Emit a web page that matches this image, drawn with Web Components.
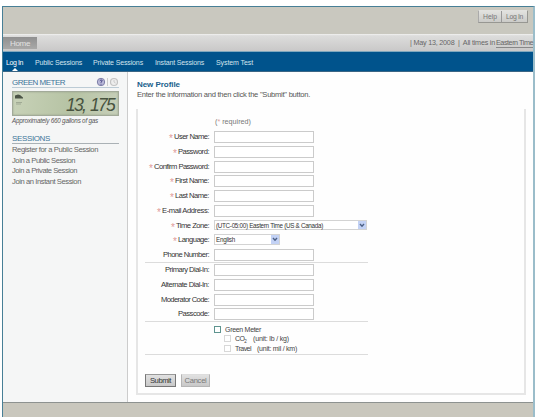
<!DOCTYPE html>
<html lang="en">
<head>
<meta charset="utf-8">
<title>New Profile</title>
<style>
  html, body { margin: 0; height: 417px; overflow: hidden; background: #fff; }
  body { font-family: "Liberation Sans", Arial, sans-serif; font-size: 7.6px; line-height: 10px; color: #444; }
</style>
</head>
<body>
<app-frame>
  <top-bar slot="header"></top-bar>
  <nav-bar slot="header"></nav-bar>
  <side-bar slot="side"></side-bar>
  <profile-page></profile-page>
</app-frame>

<script>
class BaseElement extends HTMLElement {
    constructor() {
        super()
        this.attachShadow({ mode: 'open' })
        this.shadowRoot.innerHTML = `<style>* { box-sizing: border-box; }</style>` + this.template()
    }
}

class AppFrame extends BaseElement {
    template() {
        return `
        <style>
            :host { display: flex; flex-direction: column; box-sizing: border-box; height: 411px; width: 533px;
                margin: 6px 0 0 2px; border: 1px solid #477f96; border-right: 2px solid #9bbdca; border-bottom: 0; }
            .body { display: flex; height: 330px; }
            main { flex: 1; min-width: 0; background: #fefefe; }
            footer { flex: 1; background: #c9c7bd; border-top: 1px solid #8d9290; }
        </style>
        <slot name="header"></slot>
        <div class="body"><slot name="side"></slot><main><slot></slot></main></div>
        <footer></footer>`
    }
}

class TopBar extends BaseElement {
    template() {
        return `
        <style>
            :host { display: flex; justify-content: flex-end; box-sizing: border-box; height: 27px; padding: 3px 5px 0 0; background: #c9c8bf; }
            .btns { display: flex; height: 13px; border: 1px solid #979792; border-top-color: #e2e2df; border-left-color: #aaa;
                background: linear-gradient(#e2e2df, #cbcbc8); color: #777; }
            .btns div { display: flex; align-items: center; padding: 1px 4px 0; font-size: 6.8px; }
            .btns div + div { border-left: 1px solid #999; }
        </style>
        <div class="btns"><div><fit-text w="14">Help</fit-text></div><div><fit-text w="17">Log In</fit-text></div></div>`
    }
}

class NavBar extends BaseElement {
    template() {
        return `
        <style>
            :host { display: block; }
            .tabs { display: flex; justify-content: space-between; height: 18px; background: linear-gradient(#f3f3f2 0, #dddddc 10%, #c9c8c8); border-bottom: 1px solid #80a8be; }
            .home { margin-top: 3px; width: 34px; height: 12px; padding-left: 7px; background: linear-gradient(#909090, #a9a9a8); color: #e2e2e2; font-size: 8px; line-height: 14px; }
            .date { display: flex; gap: 1px; padding-top: 4px; color: #666; font-size: 7.2px; }
            .date u { text-decoration: none; border-bottom: 1px solid #888; height: 10px; }
            nav { display: flex; height: 20px; background: #00538c; border-bottom: 1px solid #3b6685; color: #d3e3ed; padding: 6px 0 0 3px; font-size: 7px; }
            nav div { flex: none; }
            nav .on { color: #fff; display: flex; flex-direction: column; align-items: center; }
            nav .on::after { content: ""; border: 3px solid transparent; border-top: 0; border-bottom: 3px solid #fff; margin-bottom: -2px; }
        </style>
        <div class="tabs">
            <div class="home"><fit-text w="20">Home</fit-text></div>
            <div class="date"><fit-text w="85">| May 13, 2008 &nbsp;|&nbsp; All times in</fit-text><u><fit-text w="37">Eastern Time</fit-text></u></div>
        </div>
        <nav>
            <div class="on"><fit-text w="17">Log In</fit-text></div>
            <div style="margin-left:12px"><fit-text w="47">Public Sessions</fit-text></div>
            <div style="margin-left:11px"><fit-text w="50">Private Sessions</fit-text></div>
            <div style="margin-left:12px"><fit-text w="49">Instant Sessions</fit-text></div>
            <div style="margin-left:12px"><fit-text w="37">System Test</fit-text></div>
        </nav>`
    }
}

class GreenMeter extends BaseElement {
    template() {
        return `
        <style>
            :host { display: block; }
            .lcd { display: flex; justify-content: space-between; height: 25px; margin-top: 3px; padding: 2px 4px 0 2px;
                border: 1px solid #a2aa99; background: linear-gradient(100deg, #c8d2b8, #b6c3a4 55%, #c6cfb9); box-shadow: inset 0 0 2px #96a188; }
            .num { font: italic 17.5px/23px "Liberation Sans", Arial, sans-serif; color: #48533f; }
            .num span { margin-left: 5px; }
            .cap { font-size: 6.3px; font-style: italic; line-height: 9px; color: #555; }
        </style>
        <div class="lcd">
            <svg width="9" height="15" viewBox="0 0 9 15">
                <path d="M0 4V1.5L3 .5L5 1L8 3.5V4.5H0Z" fill="#4b5446"/>
                <path d="M1 8.5H7M1 10H6" stroke="#a0aa94" stroke-width="1.2"/>
            </svg>
            <fit-text class="num" w="48">13,<span>175</span></fit-text>
        </div>
        <div class="cap"><fit-text w="86">Approximately 660 gallons of gas</fit-text></div>`
    }
}

class SideBar extends BaseElement {
    template() {
        return `
        <style>
            :host { display: block; box-sizing: border-box; width: 125px; background: #f5f6f6; border-right: 1px solid #ccc; padding: 5px 8px 0 9px; }
            h3 { display: flex; justify-content: space-between; align-items: center; margin: 0; height: 11px; font-weight: normal;
                font-size: 8px; line-height: 11px; color: #3d7599; border-bottom: 1px solid #bccbd5; }
            h3.second { margin-top: 6px; border-color: #aab1b5; }
            green-meter { height: 36px; }
            a { display: block; line-height: 10.5px; color: #666; }
            .links { padding-top: 1px; }
        </style>
        <h3><fit-text w="53">GREEN METER</fit-text>
            <svg width="23" height="10" viewBox="0 0 23 10">
                <circle cx="5" cy="5" r="3.7" fill="#b9b8d8" stroke="#7e80a8"/>
                <path d="M3.8 3.8Q5 2.2 6.2 3.4Q6.5 4.3 5 5.1V5.8M5 6.8V7.7" fill="none" stroke="#4b4985" stroke-width="1"/>
                <path d="M11.5 1V9" stroke="#ccc"/>
                <circle cx="18" cy="5" r="3.5" fill="#ededed" stroke="#c3c3c3" stroke-width="1.2"/>
                <path d="M18 3V5L19.5 6" fill="none" stroke="#ccc"/>
            </svg>
        </h3>
        <green-meter></green-meter>
        <h3 class="second"><fit-text w="38">SESSIONS</fit-text></h3>
        <div class="links">
            <a><fit-text w="86">Register for a Public Session</fit-text></a>
            <a><fit-text w="63">Join a Public Session</fit-text></a>
            <a><fit-text w="65">Join a Private Session</fit-text></a>
            <a><fit-text w="69">Join an Instant Session</fit-text></a>
        </div>`
    }
}

// One label + control line, w is the label width
class FormRow extends BaseElement {
    template() {
        const req = this.hasAttribute('required')
        return `
        <style>
            :host { display: flex; height: 14.75px; align-items: flex-start; }
            .label { display: flex; justify-content: flex-end; width: 64px; margin-right: 5px; line-height: 12px; color: #333; }
            i { font-style: normal; color: #e09a9a; font-size: 10px; line-height: 15px; margin-right: 1px; }
        </style>
        <div class="label">${req ? '<i>*</i>' : ''}<fit-text w="${this.getAttribute('w')}">${this.getAttribute('label')}</fit-text></div>
        <slot><text-box></text-box></slot>`
    }
}

class TextBox extends BaseElement {
    template() {
        return `<style>:host { display: block; box-sizing: border-box; width: 100px; height: 12px; border: 1px solid #cbcbcb; background: #fff; }</style>`
    }
}

class SelectBox extends BaseElement {
    template() {
        return `
        <style>
            :host { display: flex; box-sizing: border-box; justify-content: space-between; height: 10.5px; border: 1px solid #d3d3d3; background: #fff;
                font-size: 6.3px; line-height: 10px; color: #333; padding-left: 1px; }
            svg { display: block; background: #c3d2f5; }
        </style>
        <slot></slot>
        <svg width="8" height="8.5" viewBox="0 0 8 8.5"><path d="M2 3L4 5.2L6 3" fill="none" stroke="#4d6185" stroke-width="1.4"/></svg>`
    }
}

class CheckLine extends BaseElement {
    template() {
        return `
        <style>
            :host { display: flex; height: 9.8px; align-items: center; margin-left: 69px; font-size: 7px; color: #444; line-height: 9px; }
            :host([sub]) { margin-left: 79px; }
            .box { width: 7px; height: 7px; border: 1px solid #5e948f; background: #fff; margin-right: 4px; }
            :host([sub]) .box { border-color: #d8d8d8; }
        </style>
        <span class="box"></span><slot></slot>`
    }
}

class PushButton extends BaseElement {
    template() {
        return `
        <style>
            :host { display: flex; box-sizing: border-box; height: 13px; align-items: center; justify-content: center; width: 29px;
                background: linear-gradient(#e1e1e1, #c8c8c8); border: 1px solid #b5b5b5; border-top-color: #ddd; color: #777; font-size: 7.6px; }
            :host([primary]) { width: 31px; border: 1px solid #777; border-top-color: #999; color: #333; }
        </style>
        <slot></slot>`
    }
}

class ProfilePage extends BaseElement {
    template() {
        return `
        <style>
            :host { display: block; padding: 8px 7px 0 8px; }
            h1 { margin: 0 0 0 1px; font-size: 8px; line-height: 10px; color: #205f8c; }
            .intro { margin-left: 1px; line-height: 9px; color: #555; }
            .panel { height: 286px; margin-top: 10px; padding: 8px 0 0 7px; border: 2px solid #e6e6e6; border-top: 0; }
            .req { height: 14px; padding-left: 70px; color: #777; font-size: 7.2px; }
            .req i { font-style: normal; color: #e0a0a0; }
            .group { width: 223px; }
            .ruled { border-top: 1px solid #dcdcdc; }
            .buttons { display: flex; gap: 5px; }
            sub { font-size: 4.5px; line-height: 0; }
        </style>
        <h1><fit-text w="43">New Profile</fit-text></h1>
        <div class="intro"><fit-text w="173">Enter the information and then click the "Submit" button.</fit-text></div>
        <div class="panel">
            <div class="req"><fit-text w="36">(<i>*</i> required)</fit-text></div>
            <div class="group" style="height:131.2px">
                <form-row required w="35" label="User Name:"></form-row>
                <form-row required w="31" label="Password:"></form-row>
                <form-row required w="55" label="Confirm Password:"></form-row>
                <form-row required w="34" label="First Name:"></form-row>
                <form-row required w="34" label="Last Name:"></form-row>
                <form-row required w="47" label="E-mail Address:"></form-row>
                <form-row required w="33" label="Time Zone:"><select-box style="width:153px"><fit-text w="107">(UTC-05:00) Eastern Time (US &amp; Canada)</fit-text></select-box></form-row>
                <form-row required w="31" label="Language:"><select-box style="width:66px"><fit-text w="19">English</fit-text></select-box></form-row>
                <form-row w="46" label="Phone Number:"></form-row>
            </div>
            <div class="group ruled" style="padding-top:1px;height:59px">
                <form-row w="44" label="Primary Dial-In:"></form-row>
                <form-row w="48" label="Alternate Dial-In:"></form-row>
                <form-row w="48" label="Moderator Code:"></form-row>
                <form-row w="31" label="Passcode:"></form-row>
            </div>
            <div class="group ruled" style="padding-top:2px;height:33px">
                <check-line><fit-text w="36">Green Meter</fit-text></check-line>
                <check-line sub><fit-text w="11">CO<sub>2</sub></fit-text><fit-text w="36" style="margin-left:7px">(unit: lb / kg)</fit-text></check-line>
                <check-line sub><fit-text w="16">Travel</fit-text><fit-text w="40" style="margin-left:6px">(unit: mil / km)</fit-text></check-line>
            </div>
            <div class="group ruled" style="padding-top:19px">
                <div class="buttons">
                    <push-button primary><fit-text w="21">Submit</fit-text></push-button>
                    <push-button><fit-text w="22">Cancel</fit-text></push-button>
                </div>
            </div>
        </div>`
    }
}

// Text run tracked in or out to a given width
class FitText extends BaseElement {
    template() {
        return `<style>:host { display: inline-block; flex: none; white-space: nowrap; vertical-align: top; }</style><slot></slot>`
    }

    connectedCallback() {
        const want = Number(this.getAttribute('w'))
        const chars = this.textContent.length
        this.style.letterSpacing = (want - this.getBoundingClientRect().width) / chars + 'px'
    }
}

customElements.define('app-frame', AppFrame)
customElements.define('top-bar', TopBar)
customElements.define('nav-bar', NavBar)
customElements.define('side-bar', SideBar)
customElements.define('green-meter', GreenMeter)
customElements.define('profile-page', ProfilePage)
customElements.define('form-row', FormRow)
customElements.define('text-box', TextBox)
customElements.define('select-box', SelectBox)
customElements.define('check-line', CheckLine)
customElements.define('push-button', PushButton)
customElements.define('fit-text', FitText)
</script>
</body>
</html>
